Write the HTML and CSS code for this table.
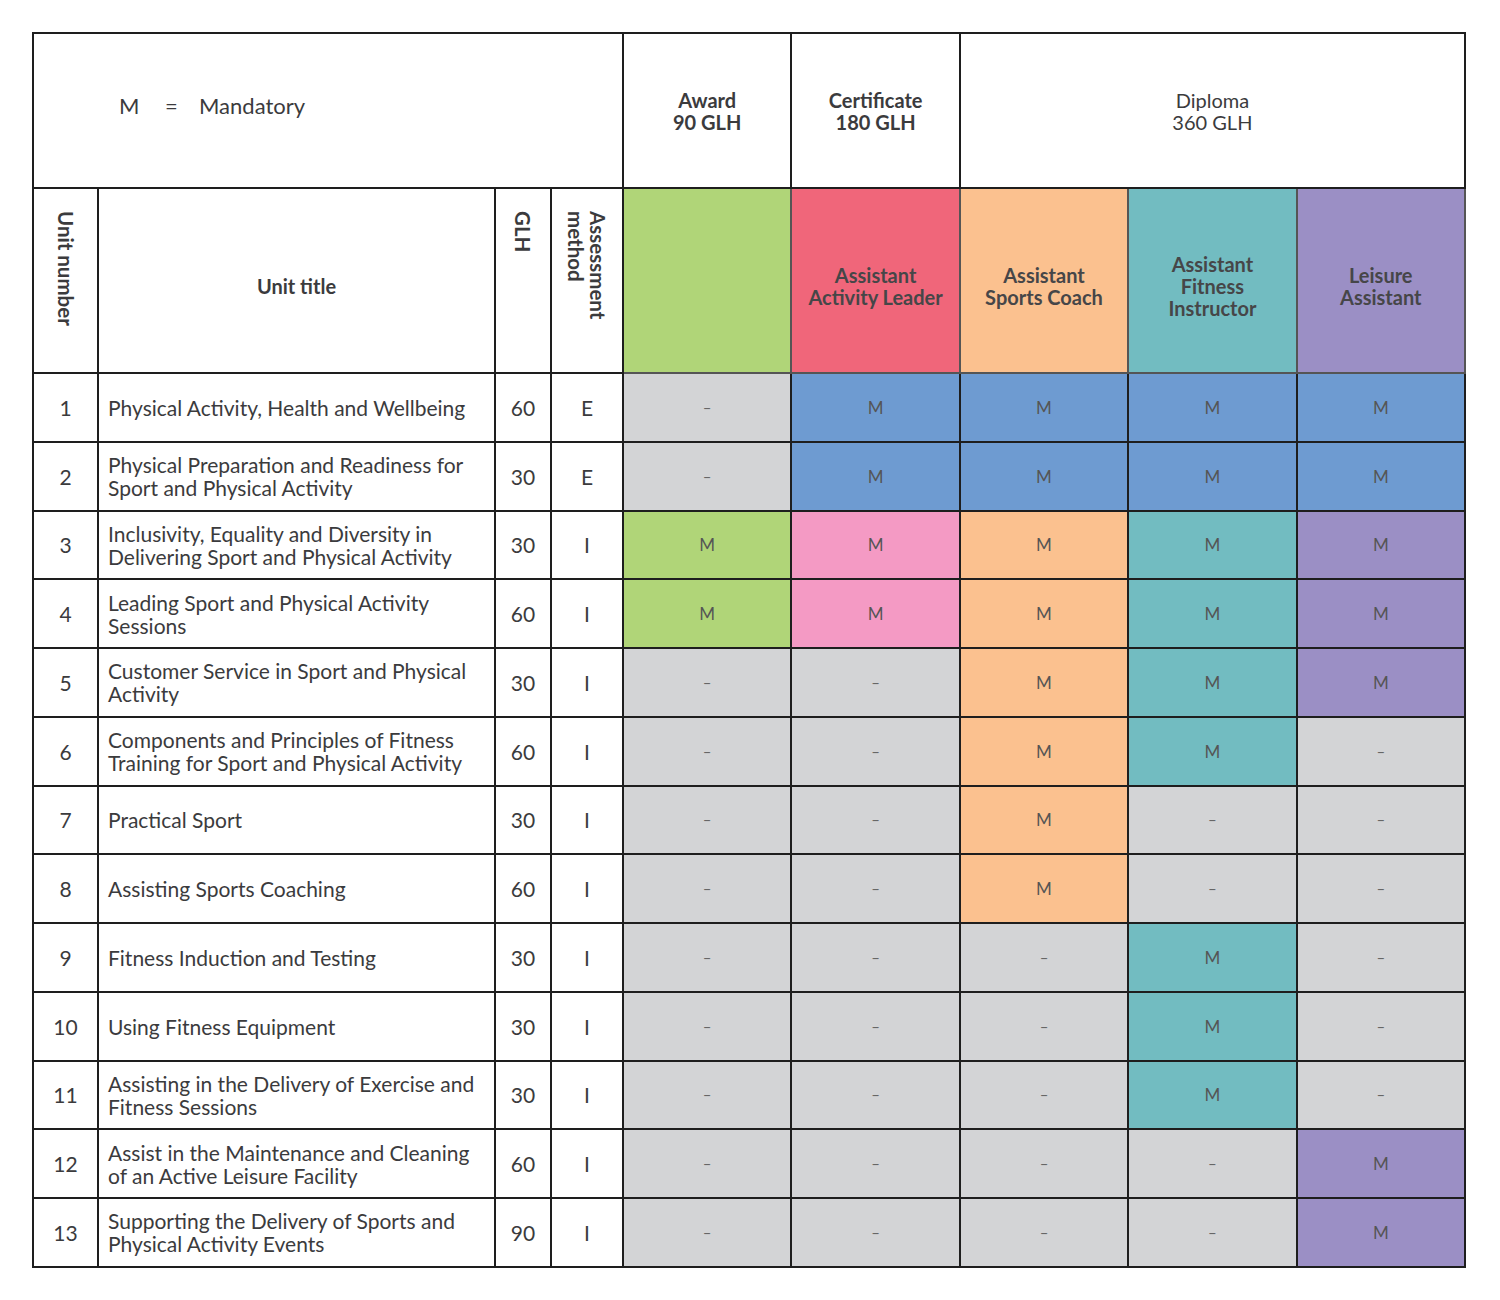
FILE: index.html
```html
<!DOCTYPE html>
<html lang="en">
<head>
<meta charset="utf-8">
<title>Units</title>
<link rel="stylesheet" href="styles.css">
</head>
<body>
<div class="page">
<table class="units">
  <colgroup>
    <col class="c-num"><col class="c-title"><col class="c-glh"><col class="c-am">
    <col class="c-q"><col class="c-q"><col class="c-q"><col class="c-q"><col class="c-q">
  </colgroup>
  <thead>
    <tr class="hrow1">
      <th colspan="4" class="legend"><span class="lk">M</span><span class="leq">=</span><span>Mandatory</span></th>
      <th class="qual bold">Award<br>90 GLH</th>
      <th class="qual bold">Certificate<br>180 GLH</th>
      <th colspan="3" class="qual">Diploma<br>360 GLH</th>
    </tr>
    <tr class="hrow2">
      <th class="vert bold"><span>Unit number</span></th>
      <th class="ttl">Unit title</th>
      <th class="vert bold"><span>GLH</span></th>
      <th class="vert bold"><span>Assessment<br>method</span></th>
      <th class="path green"></th>
      <th class="path red">Assistant<br>Activity Leader</th>
      <th class="path orange">Assistant<br>Sports Coach</th>
      <th class="path teal">Assistant<br>Fitness<br>Instructor</th>
      <th class="path purple">Leisure<br>Assistant</th>
    </tr>
  </thead>
  <tbody>
    <tr><td class="n">1</td><td class="t">Physical Activity, Health and Wellbeing</td><td class="n">60</td><td class="n">E</td>
      <td class="g d">–</td><td class="b m">M</td><td class="b m">M</td><td class="b m">M</td><td class="b m">M</td></tr>
    <tr><td class="n">2</td><td class="t">Physical Preparation and Readiness for Sport and Physical Activity</td><td class="n">30</td><td class="n">E</td>
      <td class="g d">–</td><td class="b m">M</td><td class="b m">M</td><td class="b m">M</td><td class="b m">M</td></tr>
    <tr><td class="n">3</td><td class="t">Inclusivity, Equality and Diversity in Delivering Sport and Physical Activity</td><td class="n">30</td><td class="n">I</td>
      <td class="green m">M</td><td class="pink m">M</td><td class="orange m">M</td><td class="teal m">M</td><td class="purple m">M</td></tr>
    <tr><td class="n">4</td><td class="t">Leading Sport and Physical Activity<br>Sessions</td><td class="n">60</td><td class="n">I</td>
      <td class="green m">M</td><td class="pink m">M</td><td class="orange m">M</td><td class="teal m">M</td><td class="purple m">M</td></tr>
    <tr><td class="n">5</td><td class="t">Customer Service in Sport and Physical<br>Activity</td><td class="n">30</td><td class="n">I</td>
      <td class="g d">–</td><td class="g d">–</td><td class="orange m">M</td><td class="teal m">M</td><td class="purple m">M</td></tr>
    <tr><td class="n">6</td><td class="t">Components and Principles of Fitness<br>Training for Sport and Physical Activity</td><td class="n">60</td><td class="n">I</td>
      <td class="g d">–</td><td class="g d">–</td><td class="orange m">M</td><td class="teal m">M</td><td class="g d">–</td></tr>
    <tr><td class="n">7</td><td class="t">Practical Sport</td><td class="n">30</td><td class="n">I</td>
      <td class="g d">–</td><td class="g d">–</td><td class="orange m">M</td><td class="g d">–</td><td class="g d">–</td></tr>
    <tr><td class="n">8</td><td class="t">Assisting Sports Coaching</td><td class="n">60</td><td class="n">I</td>
      <td class="g d">–</td><td class="g d">–</td><td class="orange m">M</td><td class="g d">–</td><td class="g d">–</td></tr>
    <tr><td class="n">9</td><td class="t">Fitness Induction and Testing</td><td class="n">30</td><td class="n">I</td>
      <td class="g d">–</td><td class="g d">–</td><td class="g d">–</td><td class="teal m">M</td><td class="g d">–</td></tr>
    <tr><td class="n">10</td><td class="t">Using Fitness Equipment</td><td class="n">30</td><td class="n">I</td>
      <td class="g d">–</td><td class="g d">–</td><td class="g d">–</td><td class="teal m">M</td><td class="g d">–</td></tr>
    <tr><td class="n">11</td><td class="t">Assisting in the Delivery of Exercise and<br>Fitness Sessions</td><td class="n">30</td><td class="n">I</td>
      <td class="g d">–</td><td class="g d">–</td><td class="g d">–</td><td class="teal m">M</td><td class="g d">–</td></tr>
    <tr><td class="n">12</td><td class="t">Assist in the Maintenance and Cleaning<br>of an Active Leisure Facility</td><td class="n">60</td><td class="n">I</td>
      <td class="g d">–</td><td class="g d">–</td><td class="g d">–</td><td class="g d">–</td><td class="purple m">M</td></tr>
    <tr><td class="n">13</td><td class="t">Supporting the Delivery of Sports and<br>Physical Activity Events</td><td class="n">90</td><td class="n">I</td>
      <td class="g d">–</td><td class="g d">–</td><td class="g d">–</td><td class="g d">–</td><td class="purple m">M</td></tr>
  </tbody>
</table>
</div>
</body>
</html>
```
FILE: styles.css
```css
* { box-sizing: border-box; }
html, body { margin: 0; padding: 0; background: #fff; }
body { font-family: "Lato", "Open Sans", sans-serif; color: #3b3b3d; }
.page { padding: 32px 0 0 32px; }

.units {
  border-collapse: collapse;
  table-layout: fixed;
  width: 1432px;
}
.c-num { width: 65px; }
.c-title { width: 397px; }
.c-glh { width: 56px; }
.c-am { width: 72px; }
.c-q { width: 168.4px; }

.units th, .units td {
  border: 2px solid #1e1e1e;
  padding: 0;
  font-weight: 400;
}

.hrow1 th { height: 155px; font-size: 20px; line-height: 22px; }
.legend { text-align: left; padding-left: 85px !important; padding-bottom: 10px !important; font-size: 22px !important; }
.legend .lk { display: inline-block; width: 46px; }
.legend .leq { display: inline-block; width: 34px; }
.qual { text-align: center; vertical-align: middle; padding-top: 1px !important; }
.bold { font-weight: 700 !important; }

.hrow2 th { height: 185px; }
.vert { vertical-align: top; padding-top: 22px !important; }
.vert span {
  display: inline-block;
  writing-mode: vertical-rl;
  font-size: 20.5px;
  line-height: 22px;
  text-align: left;
}
.ttl { font-weight: 700 !important; font-size: 20px; text-align: center; padding-top: 10px !important; }
.path {
  font-weight: 700 !important;
  font-size: 20px;
  line-height: 22px;
  text-align: center;
  color: #464648;
  border-color: #555 !important;
  padding-top: 10px !important;
}

tbody tr { height: 68.75px; }
tbody td { font-size: 21px; line-height: 23px; vertical-align: middle; }
td.n { text-align: center; }
td.t { padding: 0 4px 0 9px; }
td.m { text-align: center; font-size: 17px; color: #555; }
td.d { text-align: center; font-size: 15px; color: #666; }

.green { background: #b0d578; }
.red { background: #f0667a; }
.orange { background: #fbc18f; }
.teal { background: #72bcc1; }
.purple { background: #9b8fc5; }
.pink { background: #f49ac4; }
.b { background: #6e9bd1; }
.g { background: #d3d4d6; }
```
